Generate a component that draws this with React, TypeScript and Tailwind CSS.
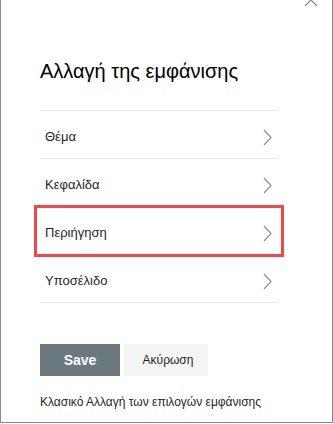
const items = [
  { label: "Θέμα", highlighted: false },
  { label: "Κεφαλίδα", highlighted: false },
  { label: "Περιήγηση", highlighted: true },
  { label: "Υποσέλιδο", highlighted: false },
];

function Chevron() {
  return (
    <svg width="9" height="17" viewBox="0 0 9 17" fill="none" stroke="#8a8a8a" strokeWidth="1.1">
      <path d="M1 1l7 7.5L1 16" />
    </svg>
  );
}

export default function App() {
  return (
    <div
      className="relative h-[423px] w-[333px] overflow-hidden border-x border-b border-[#8a8a8a] bg-white text-[#1f1f1f]"
      style={{ fontFamily: '"Liberation Sans", Arial, sans-serif' }}
    >
      {/* close button, cut off at the top */}
      <button className="absolute right-[14px] top-[-7px] text-[#888]" aria-label="Close">
        <svg width="14" height="14" viewBox="0 0 14 14" fill="none" stroke="currentColor" strokeWidth="1.2">
          <path d="M1 1l12 12M13 1L1 13" />
        </svg>
      </button>

      <div className="pl-[39px] pr-[54px] pt-[57px]">
        <h1 className="text-[20px] leading-[28px] font-normal text-black">Αλλαγή της εμφάνισης</h1>

        <ul className="mt-[25px] border-t border-[#e3e3e3]">
          {items.map((item) => (
            <li key={item.label} className="relative">
              <div className="flex h-[48px] items-center justify-between border-b border-[#e3e3e3] pl-[5px] pr-[6px] pt-[5px]">
                <span className="text-[13px] text-[#1f1f1f]">{item.label}</span>
                <Chevron />
              </div>
              {item.highlighted ? (
                <div className="pointer-events-none absolute left-[-6px] right-[-6px] top-[-2px] bottom-[-2px] border-[3px] border-[#f24848]" />
              ) : null}
            </li>
          ))}
        </ul>

        <div className="mt-[41px] flex gap-[4px]">
          <button className="h-[32px] w-[80px] bg-[#69797e] text-[14px] font-bold text-white">Save</button>
          <button className="h-[32px] w-[84px] bg-[#f4f4f4] pl-[4px] text-[12px] text-[#1f1f1f]">Ακύρωση</button>
        </div>

        <a className="mt-[17px] block whitespace-nowrap text-[12px] leading-[18px] text-[#1f1f1f]" href="#">
          Κλασικό Αλλαγή των επιλογών εμφάνισης
        </a>
      </div>
    </div>
  );
}
